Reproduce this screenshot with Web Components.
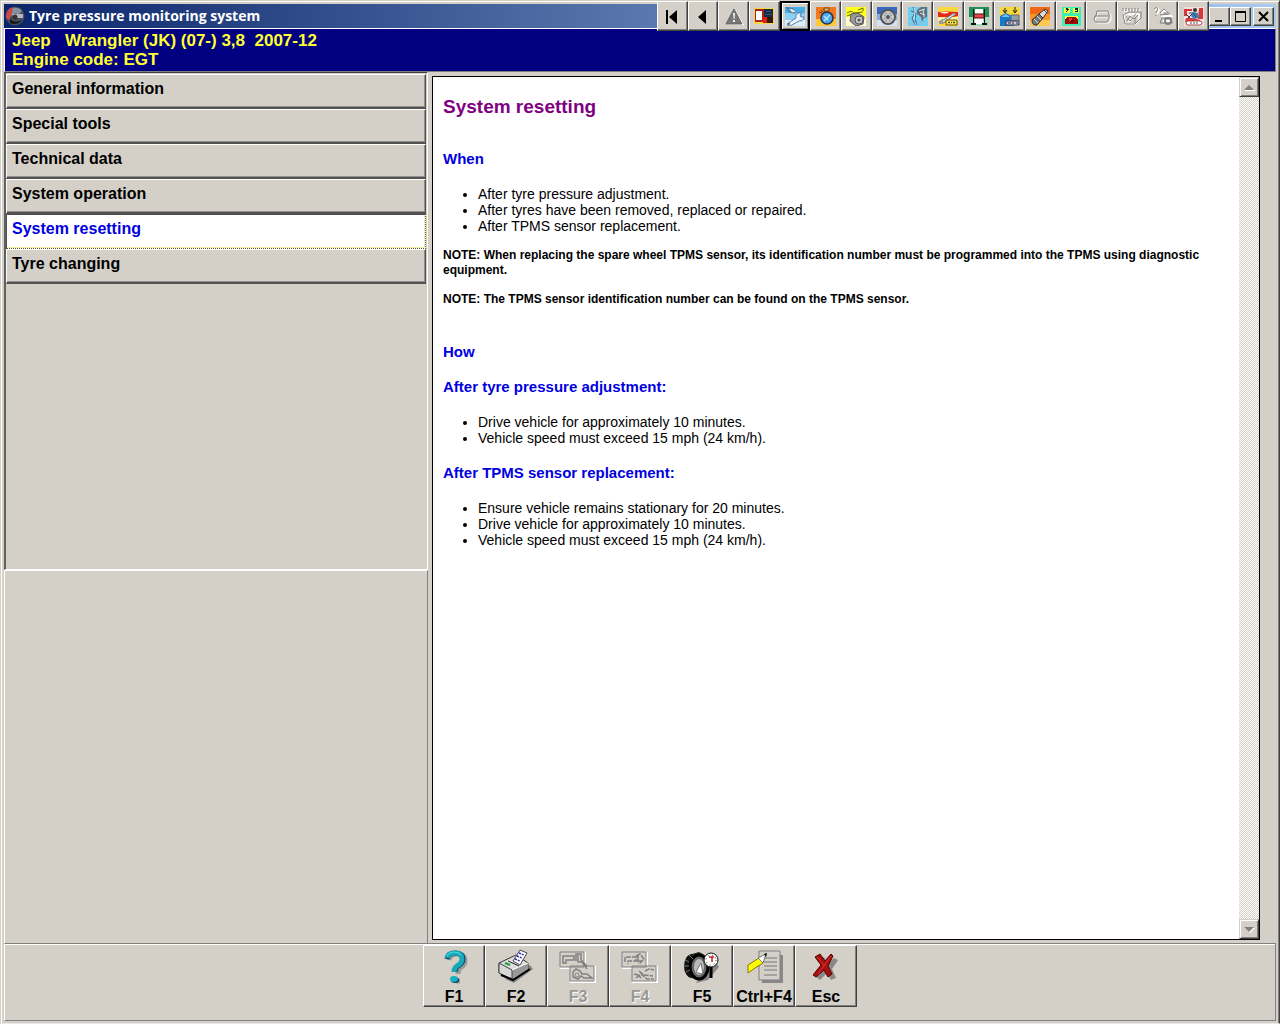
<!DOCTYPE html>
<html lang="en">
<head>
<meta charset="utf-8">
<title>Tyre pressure monitoring system</title>
<style>
html,body{height:100%;margin:0}
body{font-family:"Liberation Sans",Arial,sans-serif;background:#d4d0c8;color:#000;--face:#d4d0c8;--shade:#808080;--dark:#404040;--navy:#000080}
svg{display:block;width:100%;height:100%}
</style>
</head>
<body>
<app-window>
  <title-bar slot="title" label="Tyre pressure monitoring system">
    <tool-button label="First"><svg viewBox="0 0 20 20"><path d="M4 4h2v14H4zM15 4v14L7 11z"/></svg></tool-button>
    <tool-button label="Previous"><svg viewBox="0 0 20 20"><path d="M13 4v14L5 11z"/></svg></tool-button>
    <tool-button label="Warnings"><svg viewBox="0 0 20 20"><path d="M11 3 20 19H3z" fill="#fff"/><path d="M10 3 18 18H2z" fill="#777" stroke="#666"/><path d="M9 7h2l-.5 6h-1zM9 14h2v2H9z" fill="#eee"/></svg></tool-button>
    <tool-button label="Diagnostics"><svg viewBox="0 0 20 20"><path fill="#f8d848" d="M0 2h20v16H0z"/><path fill="#a82418" d="M1 3h10v13H1z"/><path fill="#fff" d="M2 5h6v9H2z"/><path fill="#142c48" d="M10 3h9v8h-9z"/><path fill="#3a587a" d="M12 5h5v1h-5zM11 8h7v1h-7z"/><path fill="#e02010" d="M9 11h4v6H9z"/><path fill="#301808" d="M13 11h6v6h-6z"/></svg></tool-button>
    <tool-button label="Tyre pressure" active><svg viewBox="0 0 20 20"><path fill="#48aee8" d="M0 1h20v19H0z"/><path fill="#8ad0f4" d="M0 7h20v7H0z"/><path fill="#d8f0fc" d="M0 14h20v6H0z"/><path d="M1 1l4 5 5 1-3-5M3 1l3 4" stroke="#446080" fill="none"/><path d="M3 2l5 1 4 3-5 1z" fill="#e0e8f0" stroke="#5880a8"/><path d="m2 18 9-6q-1-4 3-5l3 0-2 2 1 2 3 0q0 4-5 4l-9 5-2 0z" fill="#eef4fa" stroke="#5880a8"/><circle cx="4" cy="18" r="1" fill="#357"/></svg></tool-button>
    <tool-button label="Timing"><svg viewBox="0 0 20 20"><path fill="#f47820" d="M0 1h20v19H0z"/><path fill="#ffc838" d="M0 13h20v7H0z"/><circle cx="11" cy="12" r="6" fill="#48a8e8" stroke="#223050" stroke-width="1.500"/><path d="m8 15 6-6M8 10l4 4" stroke="#b8e4ff" stroke-width="1.500"/><path d="M8 2h5v3H8zM3 6l3 1M5 4l2 2" stroke="#704000" fill="#d8c080"/></svg></tool-button>
    <tool-button label="Belts"><svg viewBox="0 0 20 20"><path fill="#ffff20" d="M0 1h20v10H0z"/><path fill="#fffdd0" d="M0 11h20v9H0z"/><path d="M1 7q5-3 7 0l9-1M1 10l5-2M12 4l5-2v3" stroke="#667000" fill="none"/><path d="m5 8 7-1 6 4-1 7-7 2-6-5z" fill="#999" stroke="#555"/><circle cx="13" cy="14" r="4" fill="#ccc" stroke="#555"/><circle cx="13" cy="14" r="1.500" fill="#555"/></svg></tool-button>
    <tool-button label="Wheels"><svg viewBox="0 0 20 20"><path fill="#3868c0" d="M0 1h20v7H0z"/><path fill="#88aadc" d="M0 8h20v6H0z"/><path fill="#d4e2f4" d="M0 14h20v6H0z"/><circle cx="11" cy="11" r="8" fill="#555"/><circle cx="11" cy="11" r="5.500" fill="#a4a8b0" stroke="#ddd"/><path d="m11 6v10M6 11h10M7.500 7.500l7 7M14.500 7.500l-7 7" stroke="#ddd"/><circle cx="11" cy="11" r="2" fill="#555"/></svg></tool-button>
    <tool-button label="Suspension"><svg viewBox="0 0 20 20"><path fill="#70d0f4" d="M0 1h20v19H0z"/><path d="M5 1l2 6-3 5 3 7M3 5l5 2-1 6 2 6" stroke="#476078" fill="none"/><path d="m9 4 4-3h6v10l-3 1-2 4-1-5-4-3z" fill="#667078"/><path d="M11 5l6-2M12 7l5 2M15 3l1 8M6 2l1 4-1 8" stroke="#d8e8f0" fill="none"/><path d="M12 14v5M16 13v5M1 18h8" stroke="#a0b8cc"/></svg></tool-button>
    <tool-button label="Bodywork"><svg viewBox="0 0 20 20"><path fill="#ffd840" d="M0 1h20v19H0z"/><path fill="#e82818" d="M0 6q9-1 20 0v4L10 12H0z"/><path d="M2 6q5 3 9 0" fill="#fff"/><path fill="#fff0a0" d="M0 11h20v4H0z"/><path d="m2 16 14-9 2 1-14 10z" fill="#ddd" stroke="#777"/><path fill="#f8e858" stroke="#665500" d="M8 14h11v5H8z"/><path d="M10 16.500h2m1 0h1m1 0h2" stroke="#554400" stroke-width="1.500"/><path fill="#999" d="m1 15 4-2v5H1z"/></svg></tool-button>
    <tool-button label="Lifting"><svg viewBox="0 0 20 20"><path fill="#209058" d="M0 1h20v10H0z"/><path fill="#a8dcc0" d="M0 11h20v9H0z"/><path fill="#fff" d="M6 3h8v15H6z"/><path d="M4 3h1v15H4zM15 3h1v15h-1zM2 17h5v2H2zM13 17h5v2h-5z" fill="#111"/><path d="M5 8h10v4H5z" fill="#e84848" stroke="#501010"/></svg></tool-button>
    <tool-button label="EPB"><svg viewBox="0 0 20 20"><path fill="#f8d838" d="M0 1h20v13H0z"/><path fill="#1878c8" d="m0 10 6-3 6 3 2 4v6H0z"/><path d="m1 11 5-3 4 3" fill="#70c0f0"/><path d="M5 2v4m-2-2 2 3 2-3M15 1v5m-2-2 2 3 2-3" stroke="#222" fill="none"/><path d="M11 9h8v6h-8z" fill="#90a0a8" stroke="#667"/><path d="M6 15h13v4H6z" fill="#ccd" stroke="#334"/><path d="M8 17h3m1 0h2m2 0h2" stroke="#223"/></svg></tool-button>
    <tool-button label="Ignition"><svg viewBox="0 0 20 20"><path fill="#f06818" d="M0 1h20v7H0z"/><path fill="#f89428" d="M0 8h20v6H0z"/><path fill="#ffc850" d="M0 14h20v6H0z"/><path d="m2 14 7-6 4 4-6 7q-5 1-5-5z" fill="#777" stroke="#333"/><path d="m9 8 6-5 3 2-5 7z" fill="#ddd" stroke="#333"/><path d="m4 13 4 4M7 10l4 4" stroke="#ddd"/><path d="m14 4 3 3" stroke="#444"/></svg></tool-button>
    <tool-button label="Service contacts"><svg viewBox="0 0 20 20" shape-rendering="crispEdges"><path fill="#40f0b0" d="M1 1h19v19H1z"/><path fill="#ffff38" d="M3 2h6v5H3zm9 0h6v5h-6zM4 10h13v8H4z"/><path d="M5 2h2v1h1v1H7v1H6v1H5V5h1V4H5m9-2h3v4h-3V5h2V4h-2" fill="#123"/><path d="M6 11h9l2 3v4H4v-4z" fill="#a00808"/><path d="M8 12h3v3H8z" fill="#e83820"/><path d="M10 14h2v2h-2z" fill="#400"/></svg></tool-button>
    <tool-button label="Seats"><svg viewBox="0 0 20 20" fill="none"><path d="M5 5h11l2 3v5l-2 3H4l-2-2 1-4h1z M3 10h13l1 4" stroke="#fff" transform="translate(1 1)"/><path d="M5 5h11l1 3v5l-2 3H4l-2-2 1-4h1z M3 10h13" stroke="#808080"/></svg></tool-button>
    <tool-button label="Engine"><svg viewBox="0 0 20 20" fill="none"><path d="M2 3v3m3-3v3m3-3v3m3-3v3m3-3v3m3-3v3M2 8h15v6l-3 4H3zM4 10l5 5m-2-7 6 6M6 16l8-7" stroke="#fff" stroke-width="1.500"/><path d="M1 2v3m3-3v3m3-3v3m3-3v3m3-3v3m3-3v3M1 9l6-3h12v6l-6 6H3zM4 10l4 5 6-7M5 15l3-5 4 3 4-4M13 12v5" stroke="#808080"/></svg></tool-button>
    <tool-button label="Fault finding"><svg viewBox="0 0 20 20" fill="none"><path d="M2 4q2-3 4 0L4 8M8 7l4-3 6 6H8M10 15h9" stroke="#fff" stroke-width="2"/><path d="M1 3q2-3 4 0L3 7m0 2v1M7 7l4-4 6 5-10 1M9 12h9l1 5H7zM11 7h4" stroke="#808080"/><circle cx="15" cy="15" r="3" stroke="#808080" stroke-width="2"/></svg></tool-button>
    <tool-button label="Airbags"><svg viewBox="0 0 20 20"><path fill="#f4dede" d="M0 1h20v19H0z"/><path d="M0 3h8v2H3v5H0zM15 2h4v11h-5zM2 12h6l8 2v2H1z" fill="#d83838"/><circle cx="11" cy="4" r="2" fill="#333"/><path d="m9 6 5 1 1 5-5 1-3-3z" fill="#4080b0"/><path d="M5 7h4l3 4M4 12l4-4M2 8l4 4" stroke="#345" fill="none"/><rect x="2" y="15" width="16" height="4" rx="2" fill="#fff" stroke="#a44"/><path d="M6 17h8" stroke="#555" stroke-dasharray="2 1"/></svg></tool-button>
  </title-bar>

  <vehicle-header slot="vehicle"><span>Jeep&nbsp;&nbsp; Wrangler (JK) (07-) 3,8&nbsp; 2007-12</span><span>Engine code: EGT</span></vehicle-header>

  <nav-item slot="nav">General information</nav-item>
  <nav-item slot="nav">Special tools</nav-item>
  <nav-item slot="nav">Technical data</nav-item>
  <nav-item slot="nav">System operation</nav-item>
  <nav-item slot="nav" selected>System resetting</nav-item>
  <nav-item slot="nav">Tyre changing</nav-item>

  <document-view slot="content"></document-view>

  <function-key slot="keys" label="F1"><svg viewBox="0 0 40 36"><path d="M15 11q1-6 8-6 8 0 8 7 0 4-5 7-2 2-2 6M22 32h4" fill="none" stroke="#999" stroke-width="5"/><path d="M13 10q1-6 8-6 8 0 8 6 0 4-5 7-3 2-3 6" fill="none" stroke="#003c68" stroke-width="5"/><path d="M13 9q1-5 8-5 7 0 7 6 0 4-5 7-3 2-3 6" fill="none" stroke="#18a8b8" stroke-width="5"/><path d="M13 7q2-4 7-4 5 0 7 3" fill="none" stroke="#50e0e0"/><ellipse cx="21" cy="31" rx="4" ry="3" fill="#003c68"/><ellipse cx="20" cy="30" rx="4" ry="3" fill="#18b0c0"/></svg></function-key>
  <function-key slot="keys" label="F2"><svg viewBox="0 0 40 36"><path d="m9 30 9 4 19-14-3-4z" fill="#888"/><path d="m3 14 17-8 12 8v8L16 31 3 24z" fill="#ddd" stroke="#333"/><path d="m3 14 13 7 16-7v8L16 31 3 24z" fill="#999"/><path d="m3 14 13 7v9L3 24z" fill="#d8d8d8" stroke="#444"/><path d="m16 21 16-7" stroke="#fff"/><path d="m5 26 12 5 17-11" stroke="#000" fill="none" stroke-width="2"/><path d="m17 12 7-11 7 3-7 12z" fill="#fff" stroke="#445"/><path d="m23 4 5 2m-7 1 5 2m-7 1 5 2" stroke="#2020b0" stroke-width="1.500" stroke-dasharray="2 1"/><path d="m9 14 5 2" stroke="#18a030" stroke-width="2"/><path d="m12 12 11 5" stroke="#222"/></svg></function-key>
  <function-key slot="keys" label="F3" disabled><svg viewBox="0 0 40 36" fill="none"><path d="M3 4h24v15H3zM13 18h24v15H13z" stroke="#fff" stroke-width="2"/><path d="M2 3h24v15H2zM12 17h24v15H12z" fill="#d4d0c8" stroke="#808080"/><path d="M5 12V7h11v4H8v3H5zM18 12V5h5v6l6 6M20 6v7h4l5 7M15 23l3-3 4 2 2 3h5l5 4h-8l-3-2-3 3-5-2z" stroke="#808080" stroke-width="1.500"/><circle cx="19" cy="26" r="2" stroke="#808080"/></svg></function-key>
  <function-key slot="keys" label="F4" disabled><svg viewBox="0 0 40 36" fill="none"><path d="M3 4h24v15H3zM13 18h24v15H13z" stroke="#fff" stroke-width="2"/><path d="M2 3h24v15H2zM12 17h24v15H12z" fill="#d4d0c8" stroke="#808080"/><path d="M5 13V8h11v4H8v3M16 7l4-2 4 5-4 4-4-3M18 7v5h5M14 25l4 1 3 3M16 29l5-4 6 5h7M25 22l4-2 5 1M19 22l5 4 9 1" stroke="#808080" stroke-width="1.500" stroke-dasharray="5 1"/></svg></function-key>
  <function-key slot="keys" label="F5"><svg viewBox="0 0 40 36"><path d="m14 34 12-3 11-13-3-5-10 7z" fill="#888"/><ellipse cx="10" cy="17" rx="8" ry="12" fill="#111"/><path d="M10 5 17 3q10 4 10 13t-9 15l-8-2z" fill="#222"/><ellipse cx="17" cy="18" rx="9" ry="12" fill="#666" stroke="#000" stroke-width="3"/><ellipse cx="17" cy="18" rx="5" ry="8" fill="#bbb"/><path d="m14 23 5-9 2 11-5-1z" fill="#fff" stroke="#777"/><path d="M3 11l4 2M2 17h5M4 23l4-2M7 6l4 4" stroke="#777"/><path d="M29 17v12" stroke="#000" stroke-width="3"/><circle cx="29" cy="11" r="7" fill="#fff" stroke="#111"/><path d="M27 8h5m-2 0v5" stroke="#c02020" stroke-width="1.500"/><circle cx="29" cy="11" r="5" fill="none" stroke="#333" stroke-dasharray="1 3"/></svg></function-key>
  <function-key slot="keys" label="Ctrl+F4"><svg viewBox="0 0 40 36"><path d="M18 6h21v28H18z" fill="#888"/><path d="M15 2h21v29H15z" fill="#d4d0c8" stroke="#808080"/><path d="M20 9h13M20 13h13M20 17h13M20 21h13M20 26h13" stroke="#777"/><path d="m4 16 11-7 4 5-8 5-7 5z" fill="#ffff00" stroke="#887700"/><path d="m14 9 8-4-3 9z" fill="#fff" stroke="#777"/><path d="m20 5 3-1-1 4z"/></svg></function-key>
  <function-key slot="keys" label="Esc"><svg viewBox="0 0 40 36"><path d="m13 11 5-3 4 7 6-6 4 2-6 9 4 9-5 2-4-7-7 7-4-3 8-9z" fill="#888"/><path d="m9 8 5-3 5 7 6-7 2 2-5 10 4 8-4 3-4-7-8 7-3-2 8-10z" fill="#a81010" stroke="#500"/><path d="m11 8 8 9m-7 8L25 7" stroke="#e03030" fill="none"/></svg></function-key>
</app-window>

<script>
const define = (name, html, setup) => {
  const tpl = document.createElement('template');
  tpl.innerHTML = html;
  customElements.define(name, class extends HTMLElement {
    constructor() {
      super();
      this.attachShadow({mode: 'open'}).append(tpl.content.cloneNode(true));
    }
    connectedCallback() { if (setup) setup(this, this.shadowRoot); }
  });
};

define('app-window', `
<style>
:host{display:grid;grid-template-rows:auto auto minmax(0,1fr) auto;box-sizing:border-box;height:100vh;min-width:900px;padding:2px;border:1px solid #d4d0c8;border-right:1px solid #404040;border-bottom-color:#e8e8e8;box-shadow:inset 1px 1px #fff,inset -1px 0 #808080;background:var(--face)}
main{display:grid;grid-template-columns:minmax(0,1fr) minmax(0,2fr);min-height:0;margin:0 1px}
aside{display:grid;grid-template-rows:4fr 3fr;min-height:0}
nav{border:solid;border-width:1px 1px 1px 2px;border-color:#404040 #fff #fff #606060;padding:1px 1px 0 0}
.blank{border:1px solid #fff;border-right-color:#808080;border-bottom:0}
section{display:flex;min-width:0;min-height:0;padding:4px 16px 3px 4px}
footer{display:flex;justify-content:center;box-sizing:border-box;height:78px;margin:0 1px;border:1px solid #fff;border-top:1px solid #808080;border-right-color:#808080;border-bottom-color:#808080;box-shadow:inset 0 1px #fff;padding-top:1px}
</style>
<slot name="title"></slot>
<slot name="vehicle"></slot>
<main>
  <aside><nav aria-label="Topics"><slot name="nav"></slot></nav><div class="blank"></div></aside>
  <section><slot name="content"></slot></section>
</main>
<footer><slot name="keys"></slot></footer>`);

define('title-bar', `
<style>
:host{display:flex;align-items:center;height:24px;margin:1px 1px 0;background:linear-gradient(90deg,#0a246a,#a6caf0)}
.caption{flex:1;display:flex;align-items:center;gap:4px;padding-left:1px;color:#fff;font:bold 14px/20px "Open Sans",sans-serif;white-space:nowrap}
.caption svg{width:20px;height:20px}
.tools{position:relative;z-index:1;display:flex;width:552px;height:30px}
.win{display:flex;padding:0 2px 0 0}
button{display:grid;place-items:center;width:21px;height:19px;padding:0;background:var(--face);border:1px solid;border-color:#fff #404040 #404040 #fff;box-shadow:inset -1px -1px #808080}
button:last-child{margin-left:2px}
button svg{width:13px;height:13px;fill:none;stroke:#000;stroke-width:2}
</style>
<div class="caption">
  <svg viewBox="0 0 20 20"><circle cx="10" cy="10" r="9.500" fill="#444c60"/><path d="M1 12Q0 3 9 1l-2 7-3 6z" fill="#c8484c"/><path d="M8 2q6-1 9 3l-3 3q-6-2-8 3" fill="#8890a0"/><path d="M7 8h11v4H9z" fill="#b8b8bc"/><path d="M5 13q5 5 12 1-5 6-12 3z" fill="#18181c"/><circle cx="10" cy="11" r="2.500" fill="#333"/></svg>
  <span></span>
</div>
<div class="tools" role="toolbar"><slot></slot></div>
<div class="win">
  <button aria-label="Minimize"><svg viewBox="0 0 13 13"><path d="M2 11h7"/></svg></button>
  <button aria-label="Maximize"><svg viewBox="0 0 13 13"><path d="M1 2h11" /><path d="M1.500 2v9.500h10V2" stroke-width="1"/></svg></button>
  <button aria-label="Close"><svg viewBox="0 0 13 13"><path d="m2 2 9 9M11 2l-9 9"/></svg></button>
</div>`, (el, root) => { root.querySelector('span').textContent = el.getAttribute('label'); });

define('tool-button', `
<style>
:host{display:flex;flex:1;min-width:0}
button{display:grid;place-items:center;flex:1;min-width:0;padding:0;background:var(--face);border:1px solid;border-color:#fff #404040 #404040 #fff;box-shadow:inset -1px -1px #808080}
:host([active]) button{border:2px solid #000;box-shadow:inset 1px 1px #fff,inset -1px -1px #808080}
.icon{display:block;width:20px;height:20px}
</style>
<button><span class="icon"><slot></slot></span></button>`,
(el, root) => { root.querySelector('button').setAttribute('aria-label', el.getAttribute('label')); });

define('vehicle-header', `
<style>
:host{display:flex;flex-direction:column;box-sizing:border-box;height:44px;margin:0 1px;padding:2px 7px 0;background:var(--navy);color:#ff3;border:1px solid;border-color:#fff #808080 #808080 #fff;font:bold 17px/19px "Liberation Sans",Arial,sans-serif}
</style>
<slot></slot>`);

define('nav-item', `
<style>
:host{display:block}
button{display:flex;align-items:flex-start;box-sizing:border-box;width:100%;height:35px;padding:4px 5px;background:var(--face);border:solid;border-width:1px 1px 2px 1px;border-color:#fff #505050 #505050 #fff;box-shadow:inset -1px -1px #909090;font:bold 16px/20px "Liberation Sans",Arial,sans-serif;color:#000;text-align:left}
:host([selected]) button{background:#fff;color:#0000e0;border-color:#505050 #505020 #505020 #505050;border-style:solid dotted dotted solid;border-width:1px;box-shadow:inset -1px -1px #f0f0a0}
</style>
<button><slot></slot></button>`);

define('document-view', `
<style>
:host{display:flex;flex:1;min-width:0;border:1px solid #000;background:#fff}
article{flex:1;min-width:0;overflow:hidden;padding:19px 10px}
h1{margin:0 0 33px;font:bold 19px/22px "Liberation Sans",Arial,sans-serif;color:#800080}
h2,h3{margin:0 0 19px;font:bold 15px/16px "Liberation Sans",Arial,sans-serif;color:#0000e0}
ul{margin:0;padding-left:35px;font-size:14px;line-height:16px}
ul+h3{margin-top:19px}
p{margin:14px 0 0;font:bold 12px/15px "Liberation Sans",Arial,sans-serif}
p+h2{margin-top:37px}
.bar{display:flex;flex-direction:column;justify-content:space-between;width:20px;background:repeating-conic-gradient(#d4d0c8 0 25%,#fff 0 50%) 0 0/2px 2px}
button{display:grid;place-items:center;width:20px;height:20px;padding:0;background:var(--face);border:1px solid;border-color:#d4d0c8 #404040 #404040 #d4d0c8;box-shadow:inset 1px 1px #fff,inset -1px -1px #808080}
button svg{width:12px;height:12px}
</style>
<article>
  <h1>System resetting</h1>
  <h2>When</h2>
  <ul><li>After tyre pressure adjustment.</li><li>After tyres have been removed, replaced or repaired.</li><li>After TPMS sensor replacement.</li></ul>
  <p>NOTE: When replacing the spare wheel TPMS sensor, its identification number must be programmed into the TPMS using diagnostic equipment.</p>
  <p>NOTE: The TPMS sensor identification number can be found on the TPMS sensor.</p>
  <h2>How</h2>
  <h3>After tyre pressure adjustment:</h3>
  <ul><li>Drive vehicle for approximately 10 minutes.</li><li>Vehicle speed must exceed 15 mph (24 km/h).</li></ul>
  <h3>After TPMS sensor replacement:</h3>
  <ul><li>Ensure vehicle remains stationary for 20 minutes.</li><li>Drive vehicle for approximately 10 minutes.</li><li>Vehicle speed must exceed 15 mph (24 km/h).</li></ul>
</article>
<div class="bar">
  <button aria-label="Scroll up"><svg viewBox="0 0 12 12"><path d="M2 9h10v1H2z" fill="#fff"/><path d="M1 9h10L6 4z" fill="#808080"/></svg></button>
  <button aria-label="Scroll down"><svg viewBox="0 0 12 12"><path d="M2 5h10L7 10z" fill="#fff"/><path d="M1 4h10L6 9z" fill="#808080"/></svg></button>
</div>`, (el, root) => {
  const article = root.querySelector('article');
  const [up, down] = root.querySelectorAll('button');
  up.onclick = () => article.scrollBy(0, -40);
  down.onclick = () => article.scrollBy(0, 40);
});

define('function-key', `
<style>
:host{display:block}
button{display:flex;flex-direction:column;align-items:center;box-sizing:border-box;width:62px;height:62px;padding:3px 0 0;background:var(--face);border:1px solid;border-color:#fff #404040 #404040 #fff;box-shadow:inset -1px -1px #808080;font:bold 16px/18px "Liberation Sans",Arial,sans-serif;color:#000;white-space:nowrap}
.icon{flex:none;display:block;width:40px;height:36px;margin-bottom:3px}
button:disabled{color:#989898;text-shadow:1px 1px #fff}
</style>
<button><span class="icon"><slot></slot></span><span class="label"></span></button>`,
(el, root) => {
  root.querySelector('.label').textContent = el.getAttribute('label');
  root.querySelector('button').disabled = el.hasAttribute('disabled');
});
</script>
</body>
</html>
